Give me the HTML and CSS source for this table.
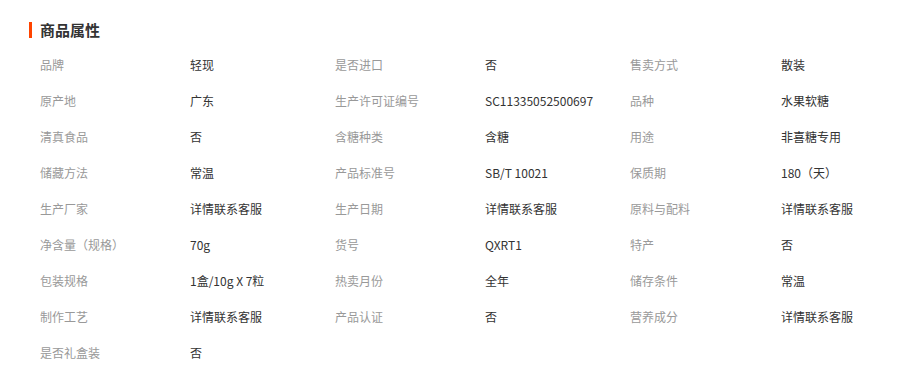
FILE: index.html
```html
<!DOCTYPE html>
<html lang="zh-CN">
<head>
<meta charset="utf-8">
<title>商品属性</title>
<link rel="stylesheet" href="styles.css">
</head>
<body>
<section class="attrs">
  <h3 class="attrs-title">商品属性</h3>
  <div class="attrs-grid">
    <span class="k">品牌</span><span class="v">轻现</span>
    <span class="k">是否进口</span><span class="v">否</span>
    <span class="k">售卖方式</span><span class="v">散装</span>

    <span class="k">原产地</span><span class="v">广东</span>
    <span class="k">生产许可证编号</span><span class="v">SC11335052500697</span>
    <span class="k">品种</span><span class="v">水果软糖</span>

    <span class="k">清真食品</span><span class="v">否</span>
    <span class="k">含糖种类</span><span class="v">含糖</span>
    <span class="k">用途</span><span class="v">非喜糖专用</span>

    <span class="k">储藏方法</span><span class="v">常温</span>
    <span class="k">产品标准号</span><span class="v">SB/T 10021</span>
    <span class="k">保质期</span><span class="v">180（天）</span>

    <span class="k">生产厂家</span><span class="v">详情联系客服</span>
    <span class="k">生产日期</span><span class="v">详情联系客服</span>
    <span class="k">原料与配料</span><span class="v">详情联系客服</span>

    <span class="k">净含量（规格）</span><span class="v">70g</span>
    <span class="k">货号</span><span class="v">QXRT1</span>
    <span class="k">特产</span><span class="v">否</span>

    <span class="k">包装规格</span><span class="v">1盒/10g X 7粒</span>
    <span class="k">热卖月份</span><span class="v">全年</span>
    <span class="k">储存条件</span><span class="v">常温</span>

    <span class="k">制作工艺</span><span class="v">详情联系客服</span>
    <span class="k">产品认证</span><span class="v">否</span>
    <span class="k">营养成分</span><span class="v">详情联系客服</span>

    <span class="k">是否礼盒装</span><span class="v">否</span>
  </div>
</section>
</body>
</html>
```
FILE: styles.css
```css
html, body {
  margin: 0;
  padding: 0;
  background: #fff;
}
body {
  font-family: "Microsoft YaHei", "Noto Sans CJK SC", "Liberation Sans", sans-serif;
  font-size: 12px;
  color: #333;
}
.attrs {
  padding: 22px 0 0 29px;
}
.attrs-title {
  margin: 0;
  height: 16px;
  line-height: 16px;
  padding-left: 8px;
  border-left: 3px solid #ff4400;
  font-size: 15px;
  font-weight: bold;
  color: #333;
}
.attrs-grid {
  margin-top: 8px;
  padding-left: 11px;
  display: grid;
  grid-template-columns: 150px 145px 150px 145px 151px 145px;
  grid-auto-rows: 36px;
  align-items: center;
}
.k {
  color: #999;
  white-space: nowrap;
}
.v {
  color: #333;
  white-space: nowrap;
}
```
